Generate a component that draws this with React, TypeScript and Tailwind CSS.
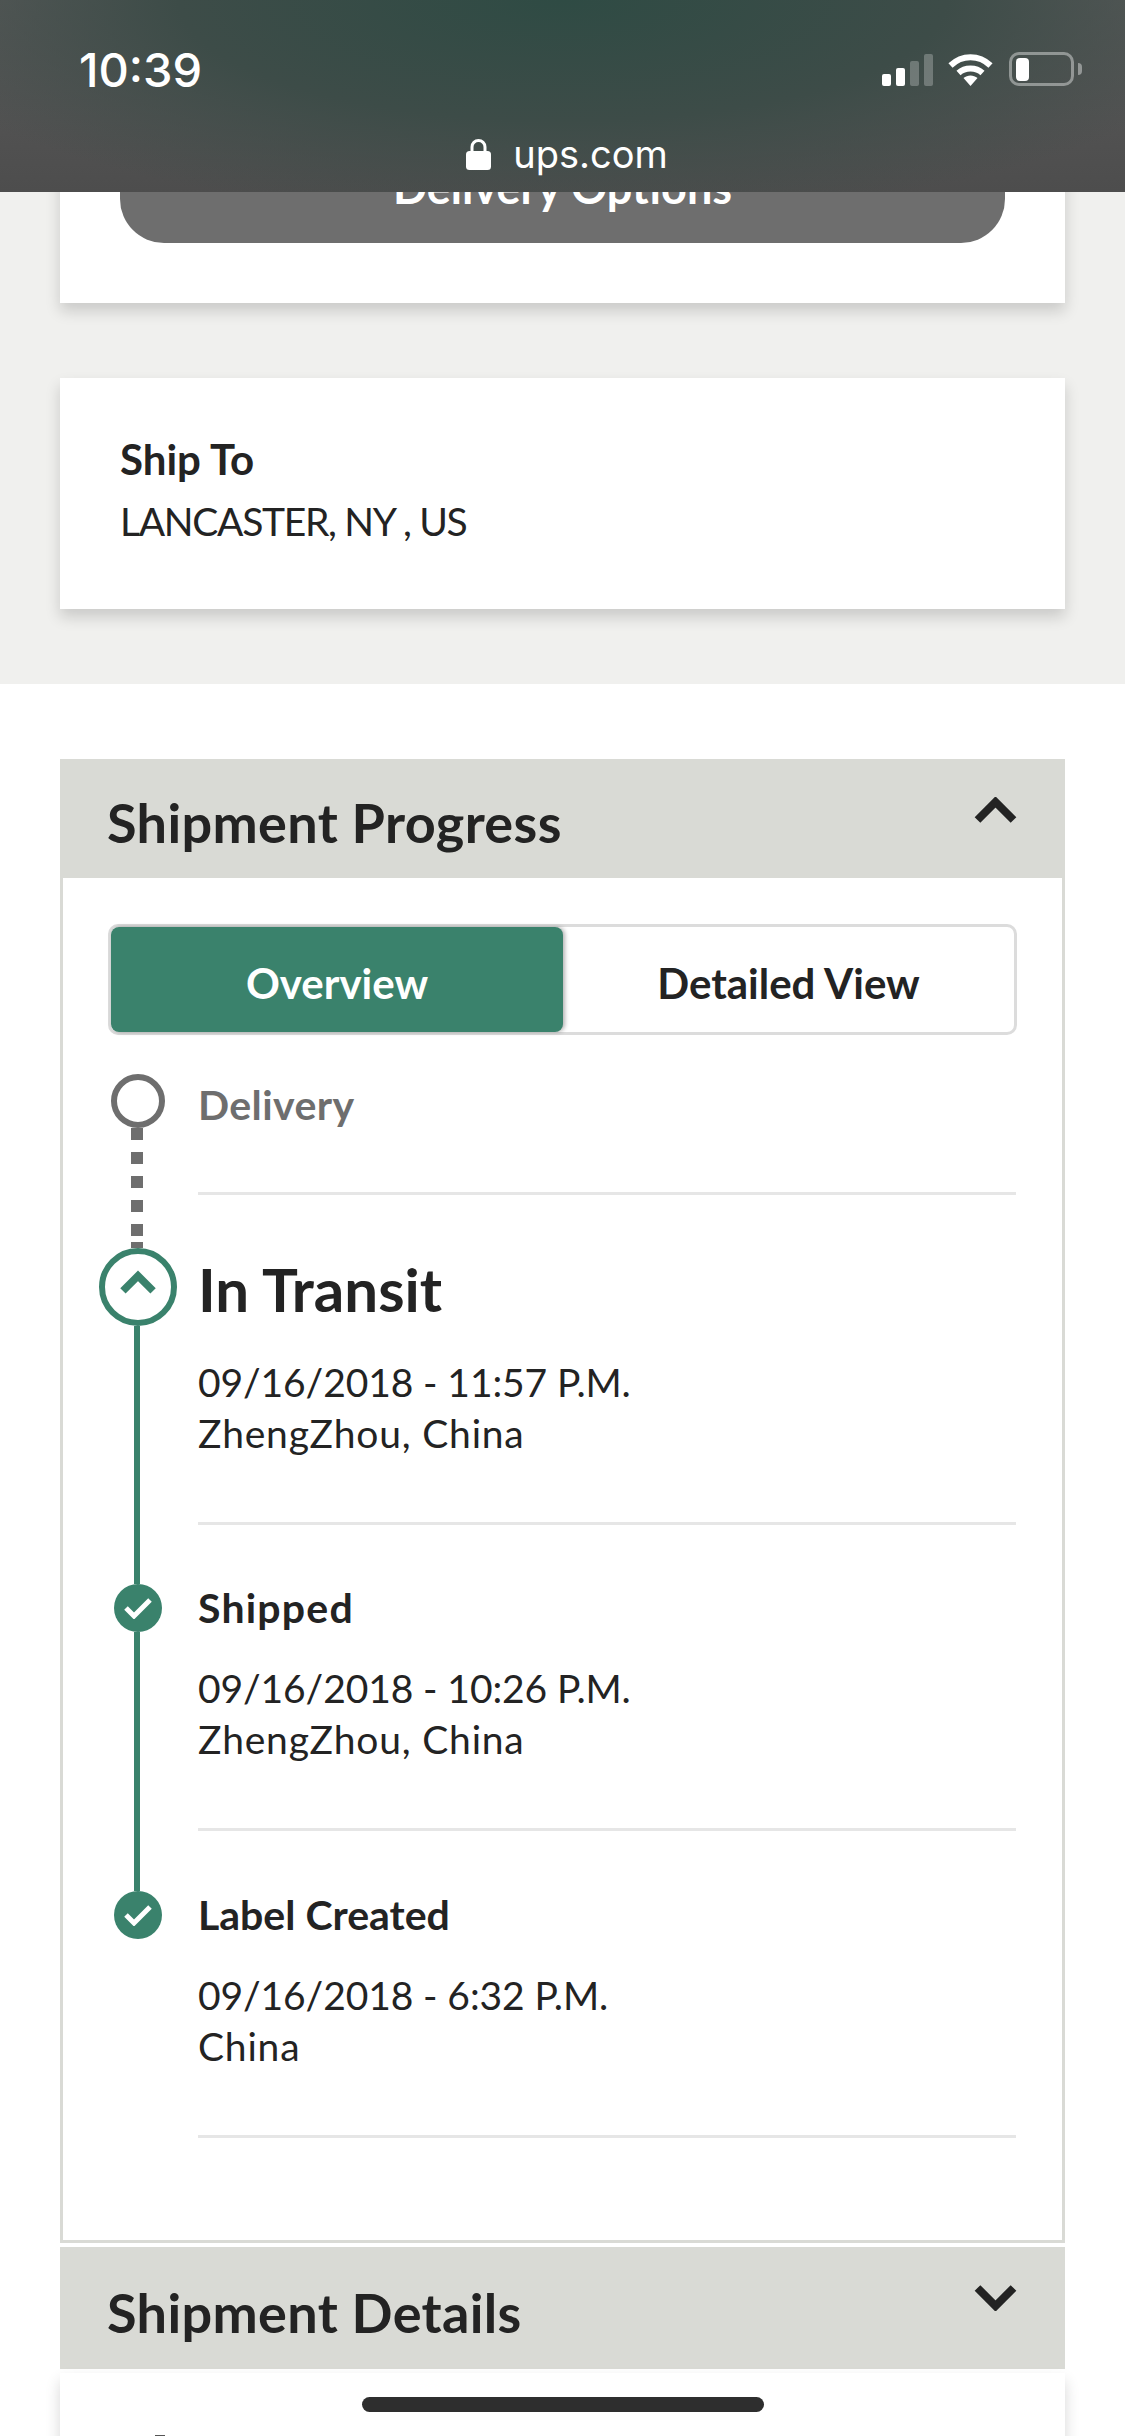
import React from 'react'

const Chevron = ({ down = false, stroke = 8, className = '' }: { down?: boolean; stroke?: number; className?: string }) => (
  <svg viewBox="0 0 43 26" className={className}>
    <path
      d={down ? 'M3.5 3 L21.5 21 L39.5 3' : 'M3.5 23 L21.5 5 L39.5 23'}
      fill="none"
      stroke="currentColor"
      strokeWidth={stroke}
    />
  </svg>
)

const CheckMarker = () => (
  <div className="flex size-[48px] shrink-0 items-center justify-center rounded-full bg-[#3a826c]">
    <svg viewBox="0 0 28 22" className="h-[22px] w-[28px]">
      <path d="M2 11 L10 19 L26 3" fill="none" stroke="#fff" strokeWidth="5" />
    </svg>
  </div>
)

const StatusBar = () => (
  <div className="absolute inset-x-0 top-0 z-10 h-[192px] bg-[radial-gradient(ellipse_62%_115%_at_50%_0%,#2f4b44_0%,#3d4c48_55%,rgba(77,78,77,0)_100%),linear-gradient(to_bottom,#5a5a5a,#4d4d4d)] text-white">
    <div className="flex items-start justify-between pl-[79px] pr-[43px] pt-[43px]">
      <span className="font-['Inter'] text-[47px] leading-[53px] font-medium">10:39</span>
      <div className="mt-[9px] flex items-end">
        <div className="flex items-end gap-[5px]">
          <div className="h-[12px] w-[9px] rounded-[2px] bg-white" />
          <div className="h-[18px] w-[9px] rounded-[2px] bg-white" />
          <div className="h-[25px] w-[9px] rounded-[2px] bg-white/25" />
          <div className="h-[32px] w-[9px] rounded-[2px] bg-white/25" />
        </div>
        <svg viewBox="0 0 45 33" className="ml-[15px] h-[33px] w-[45px]">
          <path d="M2.5 12.5 C14 1.5 31 1.5 42.5 12.5" fill="none" stroke="#fff" strokeWidth="6" />
          <path d="M10.5 20 C17 14 28 14 34.5 20" fill="none" stroke="#fff" strokeWidth="6" />
          <path d="M15.5 25 C19.5 21.5 25.5 21.5 29.5 25 L22.5 33 Z" fill="#fff" />
        </svg>
        <div className="ml-[16px] flex h-[34px] w-[65px] items-center rounded-[10px] border-[3px] border-white/40 pl-[4px]">
          <div className="h-[23px] w-[13px] rounded-[4px] bg-white" />
        </div>
        <div className="mb-[11px] ml-[4px] h-[12px] w-[4px] rounded-r-full bg-white/40" />
      </div>
    </div>
    <div className="mt-[35px] flex items-center justify-center gap-[22px] pl-[9px]">
      <svg viewBox="0 0 25 31" className="h-[31px] w-[25px]">
        <path d="M6 13 V8 a6.5 6.5 0 0 1 13 0 V13" fill="none" stroke="#fff" strokeWidth="3" />
        <rect x="0" y="12" width="25" height="19" rx="3.5" fill="#fff" />
      </svg>
      <span className="font-['Inter'] text-[38px] leading-[46px]">ups.com</span>
    </div>
  </div>
)

const Card = ({ className = '', children }: { className?: string; children: React.ReactNode }) => (
  <div className={`mx-[60px] bg-white shadow-[0_8px_14px_rgba(0,0,0,0.16)] ${className}`}>{children}</div>
)

const PanelHeader = ({ title, down = false, className = '' }: { title: string; down?: boolean; className?: string }) => (
  <div className={`flex items-center justify-between bg-[#d9dad5] pl-[47px] pr-[48px] ${className}`}>
    <h2 className="mt-[9px] text-[54px] leading-[62px] font-bold tracking-[0.35px] text-[#232323]">{title}</h2>
    <Chevron down={down} className={`h-[26px] w-[43px] text-[#232323] ${down ? 'mb-[20px]' : 'mb-[17px]'}`} />
  </div>
)

const Stop = ({ title, titleClass = '', date, place }: { title: string; titleClass?: string; date: string; place: string }) => (
  <div className="flex flex-1 flex-col">
    <p className={`text-[41px] leading-[48px] font-bold text-[#232323] ${titleClass}`}>{title}</p>
    <p className="mt-[31px] text-[39px] leading-[51px] text-[#232323]">
      <span className="tracking-[-0.1px]">{date}</span>
      <br />
      <span className="tracking-[0.8px]">{place}</span>
    </p>
    <div className="mt-[63px] mb-[60px] h-[3px] bg-[#e6e6e6]" />
  </div>
)

export default function App() {
  return (
    <div className="relative h-[2436px] w-[1125px] overflow-hidden bg-white font-['Lato',sans-serif]">
      <StatusBar />

      {/* top gray band */}
      <div className="bg-[#f0f0ee] pb-[75px]">
        <Card className="pt-[137px] pb-[60px]">
          <button className="mx-[60px] flex h-[106px] w-[885px] items-center justify-center rounded-[44px] bg-[#6e6e6e] pb-[4px] text-[45px] font-bold text-white">
            Delivery Options
          </button>
        </Card>
        <Card className="mt-[75px] px-[60px] pt-[50px] pb-[57px]">
          <p className="text-[42px] leading-[62px] font-bold text-[#232323]">Ship To</p>
          <p className="text-[39px] leading-[62px] tracking-[-1.3px] text-[#232323]">LANCASTER, NY , US</p>
        </Card>
      </div>

      <div className="pt-[75px]">
        <div className="mx-[60px]">
          <PanelHeader title="Shipment Progress" className="h-[119px]" />
          <div className="border-x-[3px] border-b-[3px] border-[#d9dad5] pl-[35px] pr-[46px] pt-[46px] pb-[42px]">
            <div className="-mr-[1px] ml-[10px] flex h-[111px] rounded-[10px] border-[3px] border-[#dcdcdc] text-[42px] font-bold">
              <div className="flex w-[452px] items-center justify-center rounded-[8px] bg-[#3a826c] pt-[8px] text-white shadow-[2px_0_4px_rgba(0,0,0,0.3)]">
                Overview
              </div>
              <div className="flex flex-1 items-center justify-center pt-[8px] text-[#232323]">Detailed View</div>
            </div>

            <div className="mt-[39px] flex gap-[20px]">
              <div className="flex w-[80px] shrink-0 flex-col items-center">
                <div className="size-[54px] shrink-0 rounded-full border-[6px] border-[#6e6e6e]" />
                <div className="mr-[2px] flex flex-1 flex-col gap-[12px]">
                  <div className="h-[12px] w-[12px] shrink-0 bg-[#6e6e6e]" />
                  <div className="h-[12px] w-[12px] shrink-0 bg-[#6e6e6e]" />
                  <div className="h-[12px] w-[12px] shrink-0 bg-[#6e6e6e]" />
                  <div className="h-[12px] w-[12px] shrink-0 bg-[#6e6e6e]" />
                  <div className="h-[12px] w-[12px] shrink-0 bg-[#6e6e6e]" />
                  <div className="-mt-[6px] h-[6px] w-[12px] shrink-0 bg-[#6e6e6e]" />
                </div>
              </div>
              <div className="flex flex-1 flex-col">
                <p className="text-[41px] leading-[62px] font-bold tracking-[0.4px] text-[#6e6e6e]">Delivery</p>
                <div className="mt-[56px] mb-[53px] h-[3px] bg-[#e6e6e6]" />
              </div>
            </div>

            <div className="flex gap-[20px]">
              <div className="flex w-[80px] shrink-0 flex-col items-center">
                <div className="flex size-[78px] shrink-0 items-center justify-center rounded-full border-[6px] border-[#3a826c]">
                  <Chevron stroke={9} className="mb-[9px] h-[25px] w-[36px] text-[#3a826c]" />
                </div>
                <div className="mr-[2px] w-[6px] flex-1 bg-[#3a826c]" />
              </div>
              <div className="flex flex-1 flex-col">
                <h3 className="pt-[6px] text-[60px] leading-[70px] font-bold text-[#232323]">In Transit</h3>
                <p className="mt-[33px] text-[39px] leading-[51px] text-[#232323]">
                  <span className="tracking-[-0.1px]">09/16/2018 - 11:57 P.M.</span>
                  <br />
                  <span className="tracking-[0.8px]">ZhengZhou, China</span>
                </p>
                <div className="mt-[63px] mb-[59px] h-[3px] bg-[#e6e6e6]" />
              </div>
            </div>

            <div className="flex gap-[20px]">
              <div className="flex w-[80px] shrink-0 flex-col items-center">
                <CheckMarker />
                <div className="mr-[2px] w-[6px] flex-1 bg-[#3a826c]" />
              </div>
              <Stop title="Shipped" titleClass="tracking-[1.2px]" date="09/16/2018 - 10:26 P.M." place="ZhengZhou, China" />
            </div>

            <div className="flex gap-[20px]">
              <div className="flex w-[80px] shrink-0 flex-col items-center">
                <CheckMarker />
              </div>
              <Stop title="Label Created" date="09/16/2018 - 6:32 P.M." place="China" />
            </div>
          </div>
          <PanelHeader title="Shipment Details" down className="mt-[4px] h-[122px]" />
        </div>
        <Card className="mt-[4px] h-[120px] pt-[62px] pl-[95px]">
          <div className="h-[1px] w-[10px] bg-[#555]" />
        </Card>
      </div>

      {/* home indicator */}
      <div className="absolute bottom-[24px] left-[362px] h-[15px] w-[402px] rounded-full bg-[#2e2e2e]" />
    </div>
  )
}
